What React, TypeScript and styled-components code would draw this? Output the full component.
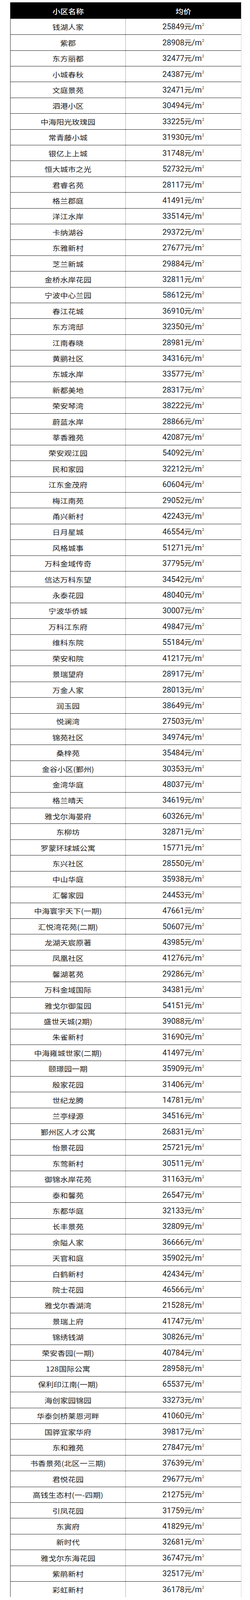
import React from "react";
import styled, { createGlobalStyle } from "styled-components";

/* The capture viewport is 4096px tall while the reference is 4459px tall:
   vertical sizes are scaled by K so that the whole table fits the frame. */
const K = 4096 / 4459;
const v = (px: number) => `${(px * K).toFixed(3)}px`;

const GlobalStyle = createGlobalStyle`
  html, body { margin: 0; padding: 0; background: #ffffff; }
  body { font-family: "Noto Sans CJK SC", "Noto Sans", sans-serif; color: #1c1c1c; }
`;

const rows: [string, number][] = [
  ["钱湖人家", 25849], ["紫郡", 28908], ["东方丽都", 32477], ["小城春秋", 24387],
  ["文庭景苑", 32471], ["泗港小区", 30494], ["中海阳光玫瑰园", 33225], ["常青藤小城", 31930],
  ["银亿上上城", 31748], ["恒大城市之光", 52732], ["君睿名苑", 28117], ["格兰郡庭", 41491],
  ["洋江水岸", 33514], ["卡纳湖谷", 29372], ["东雅新村", 27677], ["芝兰新城", 29884],
  ["金桥水岸花园", 32811], ["宁波中心兰园", 58612], ["春江花城", 36910], ["东方湾邸", 32350],
  ["江南春晓", 28981], ["黄鹂社区", 34316], ["东城水岸", 33577], ["新都美地", 28317],
  ["荣安琴湾", 38222], ["蔚蓝水岸", 28866], ["莘香雅苑", 42087], ["荣安观江园", 54092],
  ["民和家园", 32212], ["江东金茂府", 60604], ["梅江南苑", 29052], ["甬兴新村", 42243],
  ["日月星城", 46554], ["风格城事", 51271], ["万科金域传奇", 37795], ["信达万科东望", 34542],
  ["永泰花园", 48040], ["宁波华侨城", 30007], ["万科江东府", 49847], ["维科东院", 55184],
  ["荣安和院", 41217], ["景瑞望府", 28917], ["万金人家", 28013], ["润玉园", 38649],
  ["悦澜湾", 27503], ["锦苑社区", 34974], ["桑梓苑", 35484], ["金谷小区(鄞州)", 30353],
  ["金湾华庭", 48037], ["格兰晴天", 34619], ["雅戈尔海晏府", 60326], ["东柳坊", 32871],
  ["罗蒙环球城公寓", 15771], ["东兴社区", 28550], ["中山华庭", 35938], ["汇馨家园", 24453],
  ["中海寰宇天下(一期)", 47661], ["汇悦湾花苑(二期)", 50607], ["龙湖天宸原著", 43985], ["凤凰社区", 41276],
  ["馨湖茗苑", 29286], ["万科金域国际", 34381], ["雅戈尔御玺园", 54151], ["盛世天城(2期)", 39088],
  ["朱雀新村", 31690], ["中海雍城世家(二期)", 41497], ["颐璟园一期", 35909], ["殷家花园", 31406],
  ["世纪龙腾", 14781], ["兰亭绿源", 34516], ["鄞州区人才公寓", 26831], ["怡景花园", 25721],
  ["东莺新村", 30511], ["御锦水岸花苑", 31163], ["泰和馨苑", 26547], ["东都华庭", 32133],
  ["长丰景苑", 32809], ["余隘人家", 36666], ["天官和庭", 35902], ["白鹤新村", 42434],
  ["院士花园", 46566], ["雅戈尔香湖湾", 21528], ["景瑞上府", 41747], ["锦绣钱湖", 30826],
  ["荣安香园(一期)", 40784], ["128国际公寓", 28958], ["保利印江南(一期)", 65537], ["海创家园锦园", 33273],
  ["华泰剑桥莱恩河畔", 41060], ["国骅宜家华府", 39817], ["东和雅苑", 27847], ["书香景苑(北区一三期)", 37639],
  ["君悦花园", 29677], ["高钱生态村(一-四期)", 21275], ["引凤花园", 31759], ["东寅府", 41829],
  ["新时代", 32681], ["雅戈尔东海花园", 36747], ["紫鹃新村", 32517], ["彩虹新村", 36178],
];

const Page = styled.div`
  padding: ${v(7)} 0 0 26px;
  box-sizing: border-box;
`;

const Table = styled.div`
  width: 592px;
  box-sizing: border-box;
  display: flex;
  flex-direction: column;
  border-left: 1px solid #262626;
  border-right: 1px dotted #a0a0a0;
`;

const HeaderRow = styled.div`
  flex: 0 0 auto;
  height: ${v(45)};
  display: grid;
  grid-template-columns: 295px 1fr;
  background: #000000;
  color: #ffffff;
`;

const Row = styled.div<{ $first?: boolean }>`
  flex: 0 0 auto;
  height: ${v(44)};
  box-sizing: border-box;
  overflow: hidden;
  display: grid;
  grid-template-columns: 295px 1fr;
  background: #ffffff;
  color: #1c1c1c;
  border-top: ${(p) => (p.$first ? "none" : "1px solid #1a1a1a")};
`;

const Cell = styled.div<{ $divider?: boolean }>`
  min-width: 0;
  display: flex;
  align-items: center;
  justify-content: center;
  white-space: nowrap;
  line-height: 1;
  border-right: ${(p) => (p.$divider ? "1px dotted #4a4a4a" : "none")};
`;

const HeadText = styled.span`
  display: inline-block;
  font-family: "Noto Sans CJK SC", sans-serif;
  font-size: 20px;
  font-weight: 500;
  line-height: 1;
  transform: translateY(2px) scaleY(${(K * 0.95).toFixed(4)});
`;

const NameText = styled.span`
  display: inline-block;
  font-family: "Noto Sans CJK SC", sans-serif;
  font-size: 20px;
  font-weight: 400;
  line-height: 1;
  transform: translateY(1px) scaleY(${(K * 0.95).toFixed(4)});
`;

const PriceText = styled.span`
  display: inline-block;
  font-family: "Roboto", "Noto Sans CJK SC", sans-serif;
  font-size: 21px;
  line-height: 1;
  transform: translateY(1px) scale(0.95, ${K.toFixed(4)});
`;

const Unit = styled.span`
  font-family: "Noto Sans CJK SC", sans-serif;
  font-size: 20px;
`;

const Sup = styled.span`
  display: inline-block;
  font-size: 9px;
  line-height: 1;
  vertical-align: 10px;
  margin-left: 1px;
`;

export default function App() {
  return (
    <>
      <GlobalStyle />
      <Page>
        <Table>
          <HeaderRow>
            <Cell><HeadText>小区名称</HeadText></Cell>
            <Cell><HeadText>均价</HeadText></Cell>
          </HeaderRow>
          {rows.map(([name, price], i) => (
            <Row key={name} $first={i === 0}>
              <Cell $divider><NameText>{name}</NameText></Cell>
              <Cell>
                <PriceText>
                  {price}
                  <Unit>元</Unit>/m<Sup>2</Sup>
                </PriceText>
              </Cell>
            </Row>
          ))}
        </Table>
      </Page>
    </>
  );
}
